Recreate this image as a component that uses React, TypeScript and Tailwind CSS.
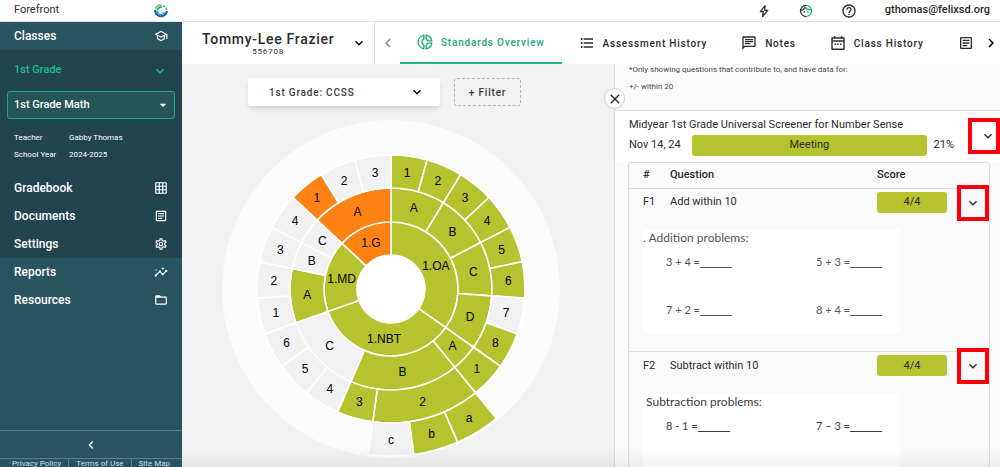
import React from "react";
import {
  MdArrowDropDown,
  MdChevronLeft,
  MdChevronRight,
  MdClose,
  MdExpandMore,
  MdFolderOpen,
  MdFormatListBulleted,
  MdGridOn,
  MdHelpOutline,
  MdInsights,
  MdOutlineArticle,
  MdOutlineChat,
  MdOutlineSchool,
  MdOutlineSettings,
} from "react-icons/md";

type Tone = "met" | "below" | "none";

interface Segment {
  label: string;
  ring: number;
  start: number;
  span: number;
  tone: Tone;
}

const LEAVES = 23;
const RADII = [34, 67, 101, 134, 167];
const CENTER = 169;
const FILL: Record<Tone, string> = { met: "#b5c32e", below: "#ff8214", none: "#f2f2f2" };

const segments: Segment[] = [
  { label: "1.OA", ring: 0, start: 0, span: 8, tone: "met" },
  { label: "1.NBT", ring: 0, start: 8, span: 8, tone: "met" },
  { label: "1.MD", ring: 0, start: 16, span: 4, tone: "met" },
  { label: "1.G", ring: 0, start: 20, span: 3, tone: "below" },
  { label: "A", ring: 1, start: 0, span: 2, tone: "met" },
  { label: "B", ring: 1, start: 2, span: 2, tone: "met" },
  { label: "C", ring: 1, start: 4, span: 2, tone: "met" },
  { label: "D", ring: 1, start: 6, span: 2, tone: "met" },
  { label: "A", ring: 1, start: 8, span: 1, tone: "met" },
  { label: "B", ring: 1, start: 9, span: 4, tone: "met" },
  { label: "C", ring: 1, start: 13, span: 3, tone: "none" },
  { label: "A", ring: 1, start: 16, span: 2, tone: "met" },
  { label: "B", ring: 1, start: 18, span: 1, tone: "none" },
  { label: "C", ring: 1, start: 19, span: 1, tone: "none" },
  { label: "A", ring: 1, start: 20, span: 3, tone: "below" },
  { label: "1", ring: 2, start: 0, span: 1, tone: "met" },
  { label: "2", ring: 2, start: 1, span: 1, tone: "met" },
  { label: "3", ring: 2, start: 2, span: 1, tone: "met" },
  { label: "4", ring: 2, start: 3, span: 1, tone: "met" },
  { label: "5", ring: 2, start: 4, span: 1, tone: "met" },
  { label: "6", ring: 2, start: 5, span: 1, tone: "met" },
  { label: "7", ring: 2, start: 6, span: 1, tone: "none" },
  { label: "8", ring: 2, start: 7, span: 1, tone: "met" },
  { label: "1", ring: 2, start: 8, span: 1, tone: "met" },
  { label: "2", ring: 2, start: 9, span: 3, tone: "met" },
  { label: "3", ring: 2, start: 12, span: 1, tone: "met" },
  { label: "4", ring: 2, start: 13, span: 1, tone: "none" },
  { label: "5", ring: 2, start: 14, span: 1, tone: "none" },
  { label: "6", ring: 2, start: 15, span: 1, tone: "none" },
  { label: "1", ring: 2, start: 16, span: 1, tone: "none" },
  { label: "2", ring: 2, start: 17, span: 1, tone: "none" },
  { label: "3", ring: 2, start: 18, span: 1, tone: "none" },
  { label: "4", ring: 2, start: 19, span: 1, tone: "none" },
  { label: "1", ring: 2, start: 20, span: 1, tone: "below" },
  { label: "2", ring: 2, start: 21, span: 1, tone: "none" },
  { label: "3", ring: 2, start: 22, span: 1, tone: "none" },
  { label: "a", ring: 3, start: 9, span: 1, tone: "met" },
  { label: "b", ring: 3, start: 10, span: 1, tone: "met" },
  { label: "c", ring: 3, start: 11, span: 1, tone: "none" },
];

function polar(radius: number, leaf: number) {
  const a = (leaf / LEAVES) * Math.PI * 2;
  return { x: CENTER + radius * Math.sin(a), y: CENTER - radius * Math.cos(a) };
}

function arcPath({ ring, start, span }: Segment) {
  const r0 = RADII[ring];
  const r1 = RADII[ring + 1];
  const p1 = polar(r1, start);
  const p2 = polar(r1, start + span);
  const p3 = polar(r0, start + span);
  const p4 = polar(r0, start);
  return `M${p1.x} ${p1.y}A${r1} ${r1} 0 0 1 ${p2.x} ${p2.y}L${p3.x} ${p3.y}A${r0} ${r0} 0 0 0 ${p4.x} ${p4.y}Z`;
}

function Sunburst() {
  return (
    <svg viewBox="0 0 338 338" className="block h-[338px] w-[338px]" role="img" aria-label="Standards">
      <circle cx={CENTER} cy={CENTER} r={169} fill="#fbfbfb" />
      {segments.map((s) => (
        <path key={`${s.ring}-${s.start}`} d={arcPath(s)} fill={FILL[s.tone]} stroke="#fff" strokeWidth="1.6" />
      ))}
      <circle cx={CENTER} cy={CENTER} r={33.5} fill="#fff" />
      {segments.map((s) => {
        const p = polar((RADII[s.ring] + RADII[s.ring + 1]) / 2, s.start + s.span / 2);
        return (
          <text
            key={`${s.ring}-${s.start}`}
            x={p.x}
            y={p.y + 4}
            textAnchor="middle"
            className="fill-black font-['Liberation_Sans',sans-serif] text-[12px]"
          >
            {s.label}
          </text>
        );
      })}
    </svg>
  );
}

function Logo() {
  return (
    <svg viewBox="0 0 14 14" className="h-[14px] w-[14px]" fill="none" aria-hidden="true">
      <path d="M7.6 1.2A5.8 5.8 0 0 0 1.5 5" stroke="#7fc77a" strokeWidth="1.6" />
      <path d="M1.2 5.8A5.8 5.8 0 0 0 12.9 7" stroke="#1f5f9e" strokeWidth="2" />
      <path d="M9 1.8a5.6 5.6 0 0 1 3.9 5" stroke="#24b79a" strokeWidth="1.4" strokeDasharray="2.4 .8" />
      <path d="M8.2 3.3A3.9 3.9 0 0 0 3.2 6.6" stroke="#2ba98b" strokeWidth="1.8" />
      <path d="M3.2 7.2A3.9 3.9 0 0 0 10.8 8" stroke="#1693c4" strokeWidth="1.8" strokeDasharray="3 .6" />
    </svg>
  );
}

function BoltIcon() {
  return (
    <svg viewBox="0 0 14 14" className="h-[14px] w-[14px]" fill="none" stroke="currentColor" strokeWidth="1.2" strokeLinejoin="round" aria-hidden="true">
      <path d="M8.200 1.500L3.300 7.600H6.300L5.600 12.500L10.700 6.300H7.600Z" />
    </svg>
  );
}

function FaceIcon() {
  return (
    <svg viewBox="0 0 24 24" className="h-[14px] w-[14px]" fill="none" strokeWidth="2.2" aria-hidden="true">
      <path d="M12 2.500a9.500 9.500 0 1 0 0 19" stroke="#2b2b2b" />
      <path d="M12 2.500a9.500 9.500 0 0 1 0 19" stroke="#14b57f" />
      <path d="M3.500 11c3.500-.8 5.800-2.900 7-6" stroke="#2b2b2b" />
      <path d="M10 4.500c1.800 3.500 5.500 5.500 10.500 5" stroke="#14b57f" />
      <circle cx="8.800" cy="13.500" r="1.400" fill="#2b2b2b" />
      <circle cx="15.200" cy="13.500" r="1.400" fill="#14b57f" />
    </svg>
  );
}

function DonutIcon() {
  return (
    <svg viewBox="0 0 16 16" className="h-4 w-4" fill="none" stroke="currentColor" strokeWidth="1.3" strokeLinejoin="round" aria-hidden="true">
      <path d="M6.900 1.200A6.900 6.900 0 0 0 6.900 14.800V10.800A3 3 0 0 1 6.900 5.200Z" />
      <path d="M9.100 1.200A6.900 6.900 0 0 1 14.800 6.900H10.700A3 3 0 0 0 9.100 5.200Z" />
      <path d="M14.800 9.100A6.900 6.900 0 0 1 9.100 14.800V10.800A3 3 0 0 0 10.700 9.100Z" />
    </svg>
  );
}

function CalendarIcon() {
  return (
    <svg viewBox="0 0 16 16" className="h-4 w-4" fill="none" stroke="currentColor" strokeWidth="1.4" strokeLinejoin="round" aria-hidden="true">
      <path d="M2 3H14V14.300H2ZM2 6H14M4.500 1V3M11.500 1V3" />
      <path d="M4.500 9.300H5.900M7.300 9.300H8.700M10.100 9.300H11.500" />
    </svg>
  );
}

const link = "flex h-7 items-center justify-between px-[14px] text-[12px] font-medium text-white";

function Sidebar() {
  return (
    <aside className="flex w-[182px] shrink-0 flex-col bg-[#285360] text-white">
      <a href="#classes" className={link}>
        Classes <MdOutlineSchool className="h-[14px] w-[14px]" />
      </a>
      <div className="bg-[#22444f]">
        <button className="flex h-[41px] w-full items-center justify-between px-[14px] text-[11px] font-medium text-[#18bd8b]">
          1st Grade <MdExpandMore className="h-4 w-4" />
        </button>
        <div className="relative mx-[7px]">
          <select
            aria-label="Class"
            className="block h-7 w-full appearance-none rounded-[3px] border border-[#1fa582] bg-[#265558] px-[6px] text-[11px] font-medium text-white"
          >
            <option>1st Grade Math</option>
          </select>
          <MdArrowDropDown className="pointer-events-none absolute right-1 top-[6px] h-4 w-4" />
        </div>
        <dl className="grid grid-cols-[55px_1fr] gap-y-[5px] px-[14px] pb-[13px] pt-[13px] text-[8px] leading-3">
          <dt>Teacher</dt>
          <dd>Gabby Thomas</dd>
          <dt>School Year</dt>
          <dd>2024-2025</dd>
        </dl>
        <a href="#gradebook" className={link}>
          Gradebook <MdGridOn className="h-[14px] w-[14px]" />
        </a>
        <a href="#documents" className={link}>
          Documents <MdOutlineArticle className="h-[14px] w-[14px]" />
        </a>
        <a href="#settings" className={link}>
          Settings <MdOutlineSettings className="h-[14px] w-[14px]" />
        </a>
      </div>
      <a href="#reports" className={link}>
        Reports <MdInsights className="h-[14px] w-[14px]" />
      </a>
      <a href="#resources" className={link}>
        Resources <MdFolderOpen className="h-[14px] w-[14px]" />
      </a>
      <div className="mt-auto">
        <button aria-label="Collapse menu" className="flex h-7 w-full items-center justify-center border-t border-[#5a7f88]">
          <MdChevronLeft className="h-4 w-4" />
        </button>
        <div className="flex h-[9px] items-start justify-center border-t border-[#5a7f88] text-[8px] leading-[10px] text-[#d3dfe2]">
          <a href="#privacy" className="px-[7px]">Privacy Policy</a>
          <a href="#terms" className="border-x border-[#5a7f88] px-[7px]">Terms of Use</a>
          <a href="#map" className="px-[7px]">Site Map</a>
        </div>
      </div>
    </aside>
  );
}

const tab = "flex h-full shrink-0 items-center gap-2 text-[10px] font-medium tracking-[0.08em] text-[#2b2b2b]";

function StudentBar() {
  return (
    <div className="flex h-[42px] shrink-0 items-center bg-white">
      <button className="flex h-full w-[193px] shrink-0 items-center justify-between border-r border-[#dcdcdc] pl-5 pr-[7px]">
        <span className="flex flex-col items-center text-[#2b2b2b]">
          <span className="whitespace-nowrap text-[14px] font-medium leading-4 tracking-wider">Tommy-Lee Frazier</span>
          <span className="text-[8px] leading-[9px] tracking-widest">556708</span>
        </span>
        <MdExpandMore className="h-4 w-4" />
      </button>
      <button aria-label="Previous tabs" className="flex h-full w-[25px] shrink-0 items-center justify-center text-[#8a8a8a]">
        <MdChevronLeft className="h-[18px] w-[18px]" />
      </button>
      <nav className="flex h-full min-w-0 flex-1 items-center overflow-hidden">
        <a href="#overview" className="flex h-full shrink-0 items-center gap-2 border-b-2 border-[#1fb382] px-[17px] text-[10px] font-medium tracking-[0.08em] text-[#1aa878]">
          <DonutIcon /> Standards Overview
        </a>
        <a href="#history" className={`${tab} pl-[17px] pr-[34px]`}>
          <MdFormatListBulleted className="h-4 w-4" /> Assessment History
        </a>
        <a href="#notes" className={`${tab} pr-[34px]`}>
          <MdOutlineChat className="h-4 w-4" /> Notes
        </a>
        <a href="#class" className={`${tab} pr-[34px]`}>
          <CalendarIcon /> Class History
        </a>
        <a href="#documents-tab" aria-label="Documents" className={tab}>
          <MdOutlineArticle className="h-4 w-4" />
        </a>
      </nav>
      <button aria-label="Next tabs" className="flex h-full w-[18px] shrink-0 items-center justify-center">
        <MdChevronRight className="h-[18px] w-[18px]" />
      </button>
    </div>
  );
}

interface Question {
  id: string;
  name: string;
  score: string;
  title: string;
  problems: string[];
  ink: string;
}

const questions: Question[] = [
  { id: "F1", name: "Add within 10", score: "4/4", title: ". Addition problems:", problems: ["3 + 4 =", "5 + 3 =", "7 + 2 =", "8 + 4 ="], ink: "text-[#565656]" },
  { id: "F2", name: "Subtract within 10", score: "4/4", title: " Subtraction problems:", problems: ["8 - 1 =", "7 – 3 ="], ink: "text-[#3c3c3c]" },
];

function Details() {
  return (
    <section className="relative w-[386px] shrink-0 border-l border-[#d9d9d9] bg-[#fafafa] text-[#2b2b2b]">
      <button aria-label="Close" className="absolute -left-[11px] top-6 z-10 flex h-[21px] w-[21px] items-center justify-center rounded-full border border-[#d0d0d0] bg-white">
        <MdClose className="h-4 w-4 shrink-0" />
      </button>
      <div className="flex h-[47px] flex-col gap-[5px] border-b border-[#e0e0e0] pl-[14px] text-[8px] leading-3 text-[#4a4a4a]">
        <p>*Only showing questions that contribute to, and have data for:</p>
        <p>+/- within 20</p>
      </div>
      <div className="flex h-[50px] items-center bg-white pl-[14px]">
        <div className="min-w-0 flex-1">
          <h2 className="text-[11px] leading-4">Midyear 1st Grade Universal Screener for Number Sense</h2>
          <div className="mt-[2px] flex items-center gap-[7px] text-[11px]">
            <span className="w-[56px] whitespace-nowrap">Nov 14, 24</span>
            <span className="flex h-[21px] flex-1 items-center justify-center rounded-[3px] bg-[#b5c32e]">Meeting</span>
            <span>21%</span>
          </div>
        </div>
        <button aria-label="Toggle assessment" className="ml-[14px] flex h-9 w-8 items-center justify-center border-4 border-[#fa0008] pl-2">
          <MdExpandMore className="h-4 w-4 shrink-0" />
        </button>
      </div>
      <div className="ml-[13px] mr-[10px] mt-[1px] rounded-[3px] border border-[#dcdcdc]">
        <table className="w-full table-fixed border-collapse text-left text-[11px]">
          <colgroup>
            <col className="w-[41px]" />
            <col />
            <col className="w-[80px]" />
            <col className="w-8" />
          </colgroup>
          <thead>
            <tr className="h-[25px] border-b border-[#dcdcdc]">
              <th className="pl-[14px] font-medium">#</th>
              <th className="font-medium">Question</th>
              <th className="font-medium">Score</th>
              <th aria-label="Details" />
            </tr>
          </thead>
          {questions.map((q) => (
            <tbody key={q.id} className="border-b border-[#dcdcdc]">
              <tr className="h-7">
                <td className="pl-[14px]">{q.id}</td>
                <td>{q.name}</td>
                <td>
                  <span className="flex h-[21px] w-[70px] items-center justify-center rounded-[3px] bg-[#b5c32e]">{q.score}</span>
                </td>
                <td className="relative">
                  <button aria-label={`Toggle ${q.id}`} className="absolute -top-1 right-0 flex h-9 w-8 items-center justify-center border-4 border-[#fa0008]">
                    <MdExpandMore className="h-4 w-4 shrink-0" />
                  </button>
                </td>
              </tr>
              <tr>
                <td colSpan={4} className="pb-[18px] pl-[14px] pt-[14px] align-top">
                  <div className={`h-[103px] w-[257px] bg-white font-['Lato',sans-serif] text-[12px] leading-4 ${q.ink}`}>
                    <p className="whitespace-pre">{q.title}</p>
                    <div className="mt-2 grid grid-cols-[150px_1fr] gap-y-8 pl-[23px] text-[11px] leading-4">
                      {q.problems.map((p) => (
                        <span key={p} className="flex">
                          {p}
                          <span className="mb-[2px] w-8 border-b border-current" />
                        </span>
                      ))}
                    </div>
                  </div>
                </td>
              </tr>
            </tbody>
          ))}
        </table>
      </div>
    </section>
  );
}

export default function App() {
  return (
    <div className="flex h-screen flex-col overflow-hidden bg-[#f2f2f2] font-['Roboto',sans-serif]">
      <header className="flex h-[22px] shrink-0 items-center border-b border-[#e3e3e3] bg-white pr-[10px] text-[#2b2b2b]">
        <div className="flex w-[182px] items-center justify-between px-[14px] text-[11px]">
          Forefront <Logo />
        </div>
        <div className="ml-auto flex items-center gap-7">
          <button aria-label="Quick actions"><BoltIcon /></button>
          <button aria-label="Students"><FaceIcon /></button>
          <button aria-label="Help"><MdHelpOutline className="h-4 w-4" /></button>
          <a href="#account" className="text-[11px] font-medium">gthomas@felixsd.org</a>
        </div>
      </header>
      <div className="flex min-h-0 flex-1">
        <Sidebar />
        <main className="relative flex min-w-0 flex-1 flex-col overflow-hidden">
          <StudentBar />
          <div className="flex min-h-0 flex-1">
            <section className="min-w-0 flex-1 pl-10 pt-[14px]">
              <div className="flex items-center gap-[14px] pl-[26px]">
                <div className="relative">
                  <select
                    aria-label="Standards set"
                    className="block h-7 w-[192px] appearance-none rounded-[3px] bg-white pl-[21px] pr-8 text-[10px] font-medium tracking-[0.08em] text-[#3c3c3c] shadow-md"
                  >
                    <option>1st Grade: CCSS</option>
                  </select>
                  <MdExpandMore className="pointer-events-none absolute right-[15px] top-[6px] h-4 w-4" />
                </div>
                <button className="h-7 w-[67px] rounded-[3px] border border-dashed border-[#b5b5b5] text-[10px] font-medium tracking-[0.08em] text-[#3c3c3c]">
                  + Filter
                </button>
              </div>
              <div className="mt-[14px]">
                <Sunburst />
              </div>
            </section>
            <Details />
          </div>
          <div className="pointer-events-none absolute inset-x-0 bottom-0 h-5 bg-linear-to-b from-transparent to-black/5" />
        </main>
      </div>
    </div>
  );
}
